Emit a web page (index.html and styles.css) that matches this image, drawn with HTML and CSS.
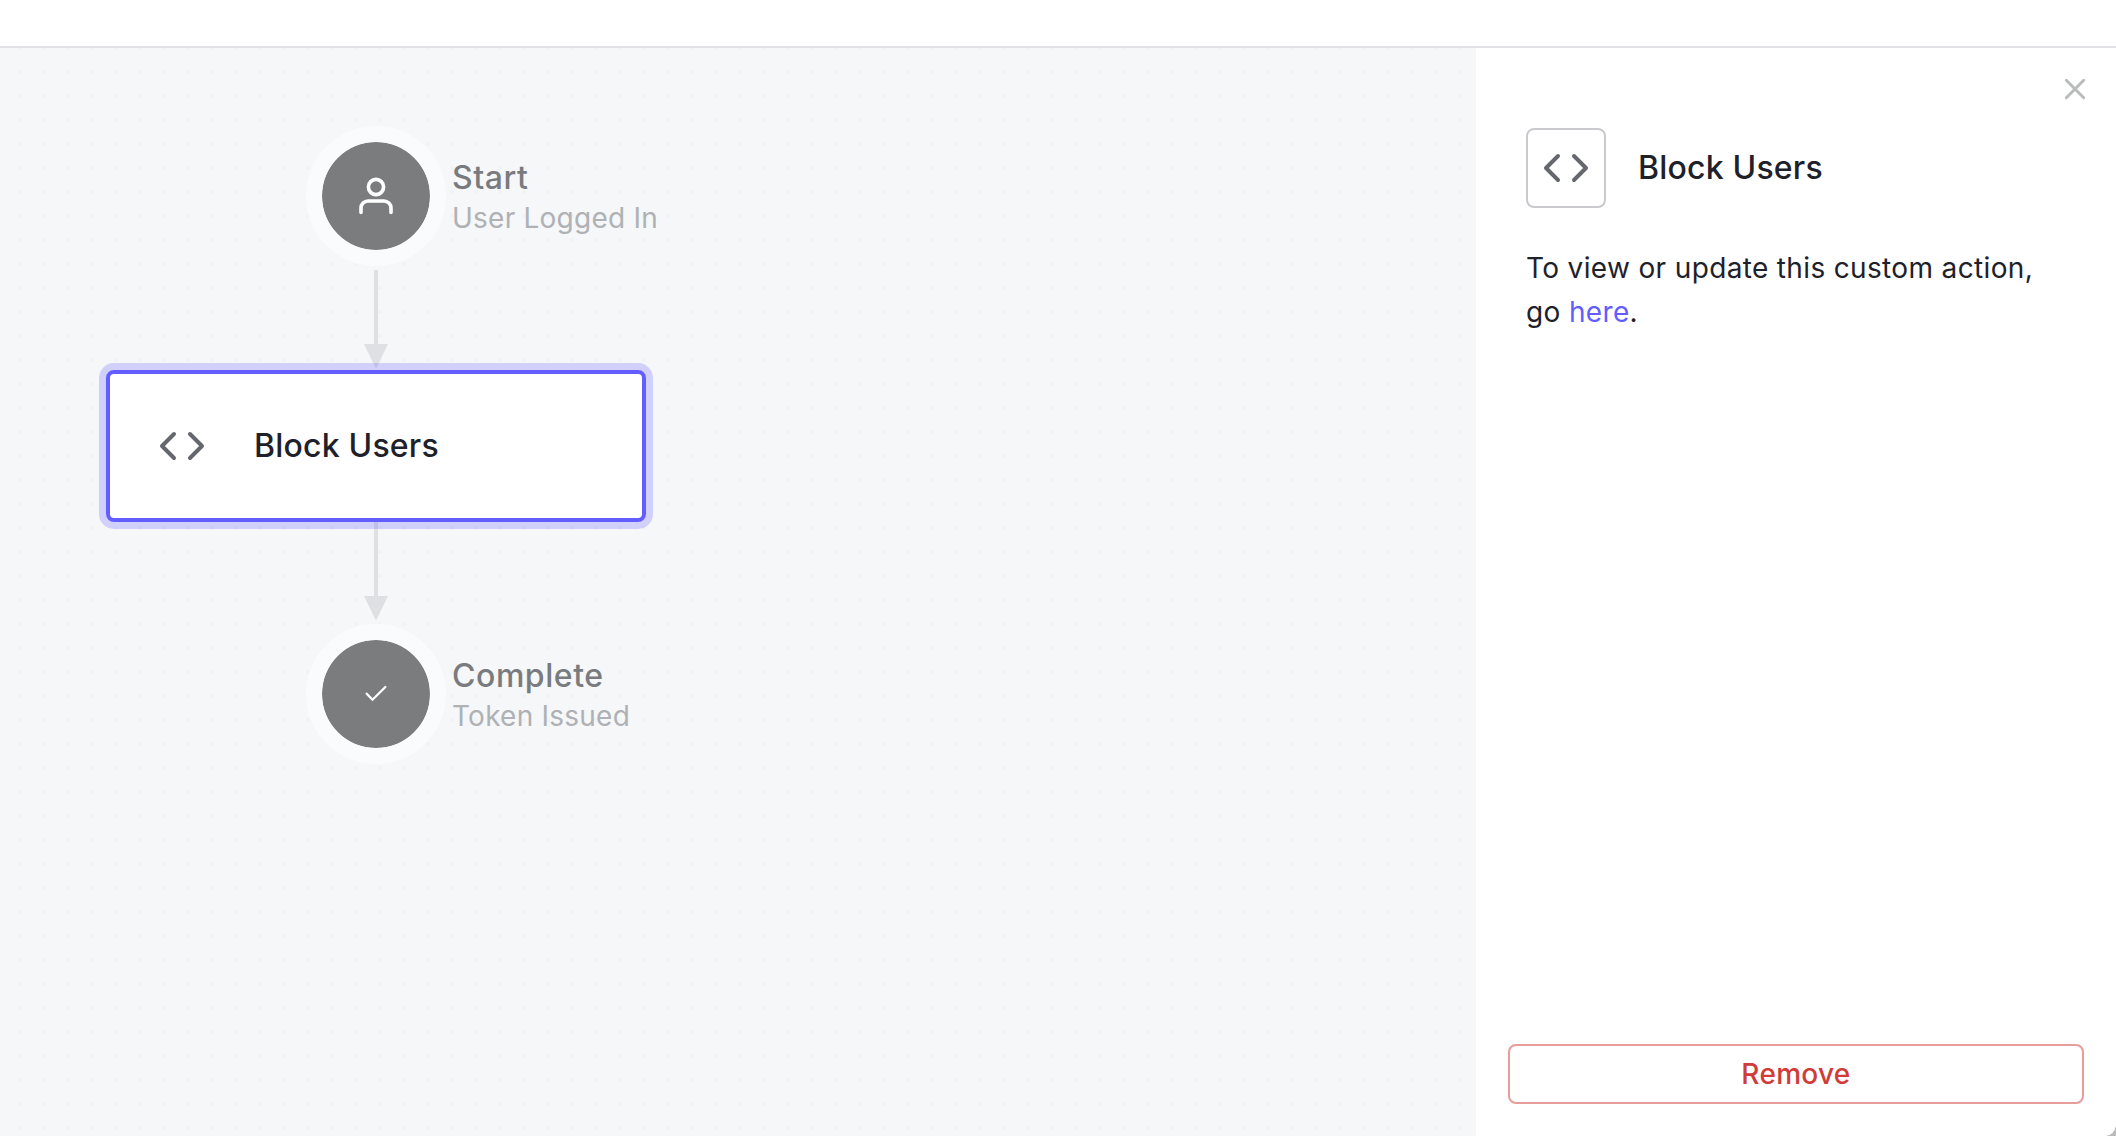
FILE: index.html
```html
<!DOCTYPE html>
<html lang="en">
<head>
<meta charset="utf-8">
<title>Login Flow</title>
<link rel="stylesheet" href="styles.css">
</head>
<body>
<div class="app">
  <header class="topbar"></header>
  <main class="workspace">
    <section class="canvas">
      <div class="flow">
        <div class="endpoint">
          <div class="disc">
            <svg class="disc-icon" viewBox="0 0 48 48">
              <circle cx="24" cy="15" r="7.6" stroke-width="3.6"/>
              <path d="M9 40.5V36a7 7 0 0 1 7-7h16a7 7 0 0 1 7 7v4.5" stroke-width="3.6"/>
            </svg>
          </div>
          <div class="label">
            <div class="label-title">Start</div>
            <div class="label-sub">User Logged In</div>
          </div>
        </div>
        <svg class="connector connector-first" viewBox="0 0 24 98"><path d="M10 0h4v74h10L12.6 97.4q-.6 1-1.2 0L0 74h10z"/></svg>
        <div class="action">
          <svg class="code-icon" viewBox="0 0 24 24"><path d="M16 18l6-6-6-6M8 6l-6 6 6 6"/></svg>
          <span class="action-name">Block Users</span>
        </div>
        <svg class="connector" viewBox="0 0 24 98"><path d="M10 0h4v74h10L12.6 97.4q-.6 1-1.2 0L0 74h10z"/></svg>
        <div class="endpoint endpoint-last">
          <div class="disc">
            <svg class="disc-icon" viewBox="0 0 48 48"><path d="M14.7 23.7l5.8 6L33.4 17" stroke-width="2.3"/></svg>
          </div>
          <div class="label">
            <div class="label-title">Complete</div>
            <div class="label-sub">Token Issued</div>
          </div>
        </div>
      </div>
    </section>
    <aside class="panel">
      <button class="close" aria-label="Close"><svg viewBox="0 0 22 22"><path d="M2.3 2.3l17.4 17.4M19.7 2.3L2.3 19.7"/></svg></button>
      <div class="panel-head">
        <div class="icon-box"><svg class="code-icon" viewBox="0 0 24 24"><path d="M16 18l6-6-6-6M8 6l-6 6 6 6"/></svg></div>
        <h2 class="panel-title">Block Users</h2>
      </div>
      <p class="panel-text">To view or update this custom action, go <a class="link">here</a>.</p>
      <button class="remove">Remove</button>
    </aside>
  </main>
  <svg class="corner" viewBox="0 0 10 10"><path d="M10 0v10H0Q8 9 10 0z"/></svg>
</div>
</body>
</html>
```
FILE: styles.css
```css
* { box-sizing: border-box; }

body {
  margin: 0;
  font-family: Inter, "Liberation Sans", sans-serif;
  color: #1e212a;
  background: #fff;
}

.app {
  position: relative;
  display: flex;
  flex-direction: column;
  height: 1136px;
  overflow: hidden;
}

.topbar {
  height: 48px;
  border-bottom: 2px solid #e1e2e5;
}

.workspace {
  display: flex;
  flex: 1;
}

.canvas {
  flex: 1;
  padding: 78px 0 0 106px;
  background: #f5f7f9 radial-gradient(circle at 12px 12px, #f1f3f5 2px, transparent 2.6px) 8px 12px / 24px 24px;
}

.flow {
  display: flex;
  flex-direction: column;
  align-items: center;
  width: 540px;
}

.endpoint { position: relative; }
.endpoint-last { margin-top: 4px; }

.disc {
  display: flex;
  align-items: center;
  justify-content: center;
  width: 140px;
  height: 140px;
  border: 16px solid #fafbfd;
  border-radius: 50%;
  background: #7b7c7e;
  background-clip: padding-box;
}

.disc-icon {
  width: 48px;
  height: 48px;
  fill: none;
  stroke: #fff;
  stroke-linecap: round;
}

.label {
  position: absolute;
  left: 146px;
  top: 32px;
  white-space: nowrap;
}

.label-title {
  font-size: 32px;
  line-height: 40px;
  font-weight: 500;
  letter-spacing: 0.55px;
  color: #7a7b7e;
}

.label-sub {
  font-size: 28px;
  line-height: 40px;
  letter-spacing: 0.23px;
  color: #afb1b5;
}

.connector {
  display: block;
  width: 24px;
  height: 98px;
  fill: #dfe0e3;
}
.connector-first { margin: 4px 0 2px; }

.action {
  position: relative;
  display: flex;
  align-items: center;
  gap: 48px;
  width: 540px;
  height: 152px;
  padding-left: 48px;
  border: 4px solid #635dff;
  border-radius: 8px;
  background: #fff;
  box-shadow: 0 0 0 7px rgba(99, 93, 255, 0.25);
}

.action-name,
.panel-title {
  margin: 0;
  font-size: 32px;
  line-height: 48px;
  font-weight: 500;
  letter-spacing: 0.2px;
}

.code-icon {
  width: 48px;
  height: 48px;
  fill: none;
  stroke: #65676e;
  stroke-width: 2;
  stroke-linecap: round;
  stroke-linejoin: round;
}

.panel {
  display: flex;
  flex-direction: column;
  width: 640px;
  padding: 30px 32px 32px;
  background: #fff;
}

.close {
  align-self: flex-end;
  width: 22px;
  height: 22px;
  margin-right: -2px;
  padding: 0;
  border: 0;
  background: none;
}

.close svg {
  display: block;
  width: 22px;
  height: 22px;
  fill: none;
  stroke: #b9babb;
  stroke-width: 2.9;
  stroke-linecap: round;
}

.panel-head {
  display: flex;
  align-items: center;
  gap: 32px;
  margin: 28px 18px 0;
}

.icon-box {
  display: flex;
  align-items: center;
  justify-content: center;
  width: 80px;
  height: 80px;
  border: 2px solid #c9cace;
  border-radius: 8px;
}

.panel-text {
  margin: 38px 18px 0;
  font-size: 28px;
  line-height: 44px;
  letter-spacing: 0.35px;
}

.link { color: #635dff; }

.remove {
  height: 60px;
  margin-top: auto;
  border: 2px solid #e89c9c;
  border-radius: 8px;
  background: #fff;
  font: 500 28px/40px Inter, "Liberation Sans", sans-serif;
  letter-spacing: 0.3px;
  color: #d03c38;
}

.corner {
  position: absolute;
  right: 0;
  bottom: 0;
  width: 10px;
  height: 10px;
  fill: #b9b9b9;
}
```
